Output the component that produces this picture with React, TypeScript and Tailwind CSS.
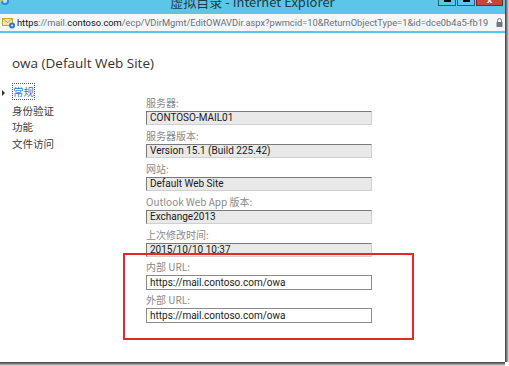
import React from "react";

const latin = { fontFamily: 'Roboto, "Noto Sans CJK SC", sans-serif' };
const title = { fontFamily: '"Open Sans", "Noto Sans CJK SC", sans-serif' };
const cjk = { fontFamily: '"Noto Sans CJK SC", Roboto, sans-serif' };

function ReadField({ label, value }: { label: string; value: string }) {
  return (
    <div className="flex flex-col">
      <div className="h-[19px] pt-[5px] text-[10px] leading-[12px] text-[#8a8a8a]" style={cjk}>
        {label}
      </div>
      <div
        className="h-[14px] w-[226px] border-t border-l border-t-[#7a7a7a] border-l-[#7a7a7a] border-r border-b border-r-[#d0d0d0] border-b-[#d0d0d0] bg-[#e9e9e9] pl-[3px] text-[10px] leading-[12px] text-[#1a1a1a]"
        style={latin}
      >
        {value}
      </div>
    </div>
  );
}

function EditField({ label, value }: { label: string; value: string }) {
  return (
    <div className="flex flex-col">
      <div className="h-[18px] pt-[4px] text-[10px] leading-[12px] text-[#8a8a8a]" style={cjk}>
        {label}
      </div>
      <div
        className="h-[15px] w-[226px] border border-[#8c8c8c] bg-white pl-[3px] text-[10px] leading-[13px] text-[#1a1a1a]"
        style={latin}
      >
        {value}
      </div>
    </div>
  );
}

export default function App() {
  return (
    <div className="relative h-[366px] w-[509px] overflow-hidden bg-white">
      <div className="flex h-[362px]">
        <div className="flex w-[505px] flex-col">
          {/* Title bar */}
          <div className="relative h-[14px] bg-[#5cc6e9]">
            <svg className="absolute left-0 top-[-4px]" width="10" height="10" viewBox="0 0 10 10">
              <circle cx="5" cy="5" r="4" fill="#2a8ad8" />
              <circle cx="5" cy="5" r="2" fill="#bfe6fb" />
              <path d="M0 6 Q5 1 10 3" stroke="#f4c542" strokeWidth="1.2" fill="none" />
            </svg>
            <div
              className="absolute left-0 right-0 top-[-7px] text-center text-[13px] leading-[17px] text-[#1f3a4a]"
              style={cjk}
            >
              虚拟目录 - Internet Explorer
            </div>
            <div className="absolute right-[2px] top-[-10px] flex gap-[1px]">
              <div className="relative h-[16px] w-[18px] border border-[#2c5d72] bg-[#5cc6e9]">
                <div className="absolute bottom-[3px] left-[5px] h-[2px] w-[7px] bg-black" />
              </div>
              <div className="relative h-[16px] w-[18px] border border-[#2c5d72] bg-[#5cc6e9]">
                <div className="absolute bottom-[3px] left-[5px] h-[3px] w-[7px] bg-black" />
              </div>
              <div className="relative h-[16px] w-[27px] border border-[#7a2a24] bg-[#c7453a]">
                <div className="absolute bottom-[1px] left-[10px] text-[9px] font-bold leading-[9px] text-white">x</div>
              </div>
            </div>
          </div>
          {/* Address bar */}
          <div className="flex h-[17px] items-center bg-[#f4f7f9] pl-[2px] pr-[2px]">
            <svg width="14" height="12" viewBox="0 0 14 12" className="shrink-0">
              <rect x="0.5" y="1.5" width="10" height="7" fill="#f7e7a6" stroke="#c9a440" />
              <path d="M0.5 1.5 L5.5 5.5 L10.5 1.5" stroke="#c9a440" fill="none" />
              <circle cx="10" cy="8.5" r="3" fill="#3d6fc4" />
              <circle cx="10" cy="8.5" r="1.1" fill="#dce8fa" />
            </svg>
            <div
              className="ml-[1px] flex-1 overflow-hidden whitespace-nowrap text-[9.3px] leading-[12px] text-[#6f6f6f]"
              style={latin}
            >
              <span className="text-[#111]">https</span>://mail.<span className="text-[#111]">contoso.com</span>
              /ecp/VDirMgmt/EditOWAVDir.aspx?pwmcid=10&amp;ReturnObjectType=1&amp;id=dce0b4a5-fb19
            </div>
            <svg width="7" height="9" viewBox="0 0 7 9" className="ml-[2px] shrink-0">
              <path d="M1.5 4 V2.5 a2 2 0 0 1 4 0 V4" stroke="#777" fill="none" />
              <rect x="0.5" y="4" width="6" height="5" fill="#777" />
            </svg>
          </div>
          <div className="h-[2px] bg-[#5cc6e9]" />
          {/* Content */}
          <div className="flex-1 bg-white pl-[12px] pt-[20px]">
            <div className="text-[13.5px] leading-[20px] text-[#333]" style={title}>
              owa (Default Web Site)
            </div>
            <div className="mt-[11px] flex">
              <div className="w-[134px] text-[10.5px] leading-[16.5px] text-[#3a3a3a]" style={cjk}>
                <div className="relative">
                  <span className="absolute left-[-10px] top-[6px] h-0 w-0 border-y-[3px] border-l-[3px] border-y-transparent border-l-[#333]" />
                  <span className="border border-dotted border-[#555] text-[#2f7ad0]">常规</span>
                </div>
                <div className="mt-[2px]">身份验证</div>
                <div>功能</div>
                <div>文件访问</div>
              </div>
              <div className="flex flex-col pt-[8px]">
                <ReadField label="服务器:" value="CONTOSO-MAIL01" />
                <ReadField label="服务器版本:" value="Version 15.1 (Build 225.42)" />
                <ReadField label="网站:" value="Default Web Site" />
                <ReadField label="Outlook Web App 版本:" value="Exchange2013" />
                <ReadField label="上次修改时间:" value="2015/10/10 10:37" />
                <EditField label="内部 URL:" value="https://mail.contoso.com/owa" />
                <EditField label="外部 URL:" value="https://mail.contoso.com/owa" />
              </div>
            </div>
          </div>
        </div>
        <div className="w-[4px] bg-gradient-to-r from-[#3a3a3a] via-[#8a8a8a] to-[#e8e8e8]" />
      </div>
      <div className="h-[4px] w-[505px] bg-gradient-to-b from-[#3a3a3a] via-[#8a8a8a] to-[#e8e8e8]" />
      {/* red annotation box */}
      <div className="absolute left-[123px] top-[253px] h-[87px] w-[291px] border-2 border-[#e8262b]" />
    </div>
  );
}
